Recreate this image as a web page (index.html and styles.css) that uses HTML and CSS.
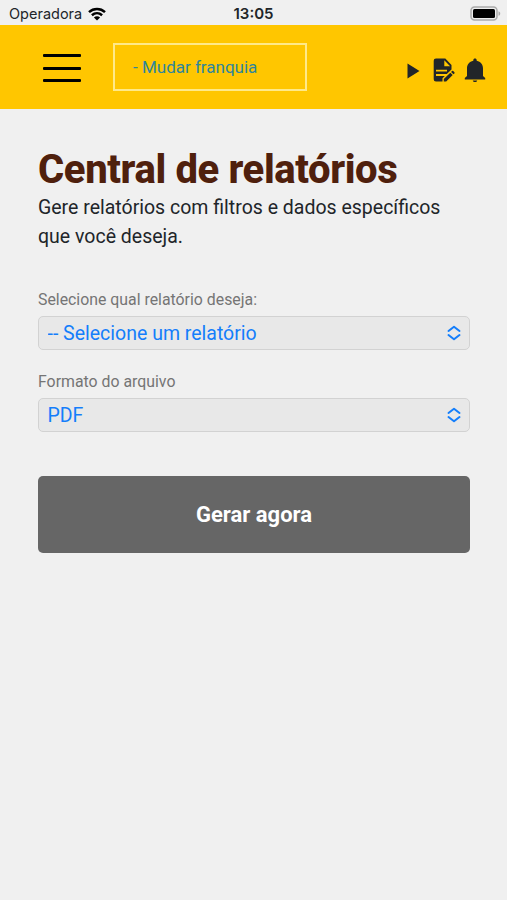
FILE: index.html
```html
<!DOCTYPE html>
<html lang="pt-BR">
<head>
<meta charset="UTF-8">
<meta name="viewport" content="width=device-width, initial-scale=1.0">
<link rel="stylesheet" href="styles.css">
<title>Central de relatórios</title>
</head>
<body>
  <div class="status-bar">
    <div class="carrier">
      <span>Operadora</span>
      <svg class="wifi" viewBox="0 0 18 14" width="18" height="14">
        <path d="M1 5.1C5.6.9 12.4.9 17 5.1M3.9 8.2c3-2.7 7.2-2.7 10.2 0" fill="none" stroke="#000" stroke-width="2.5"/>
        <path d="M5.9 10.4c1.8-1.5 4.4-1.5 6.2 0L9 13.6z"/>
      </svg>
    </div>
    <div class="clock">13:05</div>
    <svg class="battery" viewBox="0 0 31 15" width="31" height="15">
      <rect x="1" y="1" width="26" height="13" rx="3.5" fill="#eee" stroke="#aaa" stroke-width="1.5"/>
      <rect x="3" y="3" width="22" height="9" rx="1.5"/>
      <path d="M28.5 5.2v4.6c2.300-.8 2.300-3.800 0-4.600z" fill="#aaa"/>
    </svg>
  </div>

  <header class="header">
    <button class="menu-button" aria-label="Menu">
      <span></span>
      <span></span>
      <span></span>
    </button>
    <a class="franchise" href="#">- Mudar franquia</a>
    <div class="header-icons">
      <svg class="icon-play" viewBox="0 0 13 16" width="13" height="16">
        <path d="M.5.5 12.500 8 .5 15.500z"/>
      </svg>
      <svg class="icon-file" viewBox="0 0 22 25" width="22" height="25">
        <path fill-rule="evenodd" d="M3 .5h9.300L18.500 7v4.400L13.800 16H3v2h8.800L9.500 20.300V23.500H3A2.300 2.300 0 0 1 .7 21.200V2.800A2.300 2.300 0 0 1 3 .5zM11.300 2.300v5.900h5.800zM3 11.800v1.600h11v-1.600z"/>
        <path d="M10.800 21.100l6.500-6.400 2.400 2.300-6.500 6.500h-2.400zM18.100 13.900l.9-.9q.6-.5 1.200 0l1.200 1.200q.5.600 0 1.200l-.9.800z"/>
      </svg>
      <svg class="icon-bell" viewBox="0 0 22 25" width="22" height="25">
        <path d="M11 .6c1 0 1.700.7 1.700 1.600v.6c4 .9 6.300 3.800 6.300 7.600v7.500l2.200 2.200v1.300H.8v-1.300L3 17.900v-7.500c0-3.800 2.300-6.700 6.300-7.600v-.6C9.300 1.300 10 .6 11 .6z"/>
        <path d="M8.800 22.400h4.400c-.3 2-4.100 2-4.400 0z"/>
      </svg>
    </div>
  </header>

  <main class="container">
    <h1>Central de relatórios</h1>
    <p class="intro">Gere relatórios com filtros e dados específicos que você deseja.</p>

    <div class="field">
      <label for="relatorio">Selecione qual relatório deseja:</label>
      <div class="select-box">
        <select id="relatorio">
          <option>-- Selecione um relatório</option>
        </select>
        <svg class="arrows" viewBox="0 0 14 16" width="14" height="16">
          <path d="M1.500 6 7 1.700 12.500 6M1.500 10 7 14.300 12.500 10"/>
        </svg>
      </div>
    </div>

    <div class="field">
      <label for="formato">Formato do arquivo</label>
      <div class="select-box">
        <select id="formato">
          <option>PDF</option>
        </select>
        <svg class="arrows" viewBox="0 0 14 16" width="14" height="16">
          <path d="M1.500 6 7 1.700 12.500 6M1.500 10 7 14.300 12.500 10"/>
        </svg>
      </div>
    </div>

    <button class="submit-button">Gerar agora</button>
  </main>
</body>
</html>
```
FILE: styles.css
```css
* {
  box-sizing: border-box;
}

body {
  margin: 0;
  background-color: #f0f0f0;
  color: #212529;
  font-family: Roboto, sans-serif;
}

svg {
  display: block;
}

/* Barra de status */
.status-bar {
  display: grid;
  grid-template-columns: 1fr auto 1fr;
  align-items: center;
  height: 25px;
  padding: 2px 6px 0 9px;
  font-family: Inter, sans-serif;
  font-size: 14.5px;
}

.carrier {
  display: flex;
  align-items: center;
  gap: 6px;
}

.clock {
  margin-right: 3px;
  font-size: 15px;
  font-weight: 600;
}

.battery {
  justify-self: end;
}

/* Topo amarelo */
.header {
  display: flex;
  align-items: center;
  height: 84px;
  padding: 0 21px 0 43px;
  background-color: #ffc600;
}

.menu-button {
  display: flex;
  flex-direction: column;
  gap: 9.5px;
  width: 38px;
  margin-top: 2px;
  padding: 0;
  border: none;
  background: none;
}

.menu-button span {
  height: 3px;
  border-radius: 1px;
  background-color: #000;
}

.franchise {
  width: 194px;
  height: 48px;
  margin-left: 32px;
  padding-left: 18px;
  border: 2px solid #ffe989;
  color: #2e859c;
  font-size: 17px;
  line-height: 45px;
  text-decoration: none;
}

.header-icons {
  display: flex;
  align-items: center;
  gap: 9px;
  margin-top: 7px;
  margin-left: auto;
  fill: #212529;
}

.icon-play {
  margin-right: 4px;
}

/* Formulario */
.container {
  padding: 38px 37px 0 38px;
}

h1 {
  margin: 0;
  color: #4f200d;
  font-size: 40px;
  font-weight: 800;
  letter-spacing: -0.38px;
  line-height: 46px;
}

.intro {
  margin: 0 0 39px;
  font-size: 19.5px;
  line-height: 29px;
}

.field {
  margin-bottom: 22px;
}

.field label {
  display: block;
  margin-bottom: 7px;
  color: #757575;
  font-size: 15.85px;
  line-height: 19px;
}

.select-box {
  position: relative;
}

.select-box select {
  display: block;
  width: 100%;
  height: 34px;
  padding: 0 8.5px;
  appearance: none;
  border: 1px solid #d2d2d2;
  border-radius: 5px;
  background-color: #e8e8e8;
  color: #147efb;
  font-family: inherit;
  font-size: 19.5px;
}

.arrows {
  position: absolute;
  top: 9px;
  right: 9px;
  fill: none;
  stroke: #147efb;
  stroke-width: 2;
  stroke-linecap: round;
  stroke-linejoin: round;
  pointer-events: none;
}

.submit-button {
  width: 100%;
  height: 77px;
  margin-top: 22px;
  padding-bottom: 2px;
  border: none;
  border-radius: 5px;
  background-color: #666;
  color: #fff;
  font-family: inherit;
  font-size: 22px;
  font-weight: 700;
}
```
